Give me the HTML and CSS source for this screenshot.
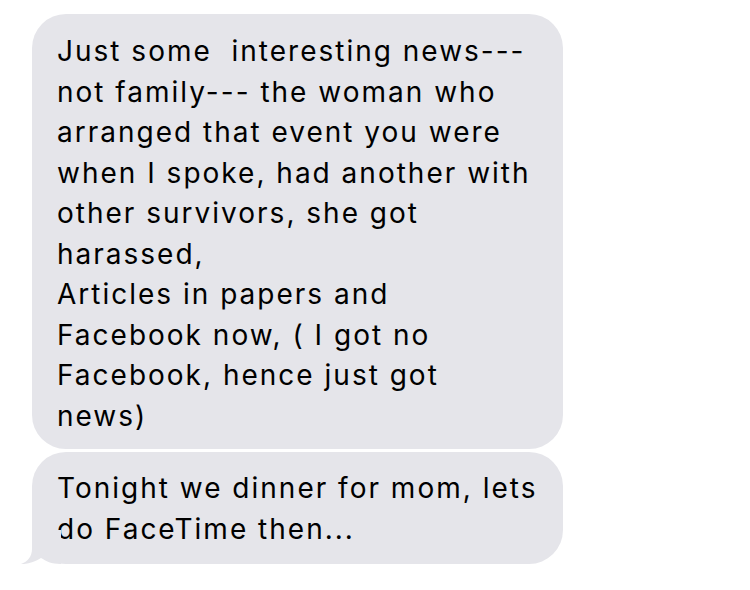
FILE: index.html
```html
<!DOCTYPE html>
<html>
<head>
<meta charset="utf-8">
<link rel="stylesheet" href="styles.css">
</head>
<body>
<div class="thread">
  <div class="bubble">
    <span class="line">Just some&nbsp; interesting news---</span>
    <span class="line">not family--- the woman who</span>
    <span class="line">arranged that event you were</span>
    <span class="line">when I spoke, had another with</span>
    <span class="line">other survivors, she got</span>
    <span class="line">harassed,</span>
    <span class="line">Articles in papers and</span>
    <span class="line">Facebook now, ( I got no</span>
    <span class="line">Facebook, hence just got</span>
    <span class="line">news)</span>
  </div>
  <div class="msg">
    <div class="bubble last">
      <span class="line">Tonight we dinner for mom, lets</span>
      <span class="line">do FaceTime then...</span>
    </div>
    <div class="tail"></div>
  </div>
</div>
</body>
</html>
```
FILE: styles.css
```css
html, body {
  margin: 0;
  padding: 0;
  background: #ffffff;
}
.thread {
  display: flex;
  flex-direction: column;
  gap: 3px;
  padding: 14px 0 0 32px;
}
.msg {
  position: relative;
}
.bubble {
  position: relative;
  box-sizing: border-box;
  width: 531px;
  background: #e5e5ea;
  border-radius: 34px;
  padding: 17px 10px 13px 25px;
  font-family: Inter, "Noto Sans", sans-serif;
  font-size: 28px;
  letter-spacing: 2px;
  line-height: 40.5px;
  color: #000;
}
.line {
  display: block;
  white-space: nowrap;
}
.bubble.last {
  padding-top: 16px;
  padding-bottom: 15px;
}
.tail {
  position: absolute;
  left: -11px;
  bottom: 0;
  width: 40px;
  height: 34px;
  background: #e5e5ea;
  clip-path: path("M11,0 L11,19 C11,27 6,32 0,34 C6,34.5 14,32 20,28 C25,31 30,34 40,34 L40,0 Z");
}
```
